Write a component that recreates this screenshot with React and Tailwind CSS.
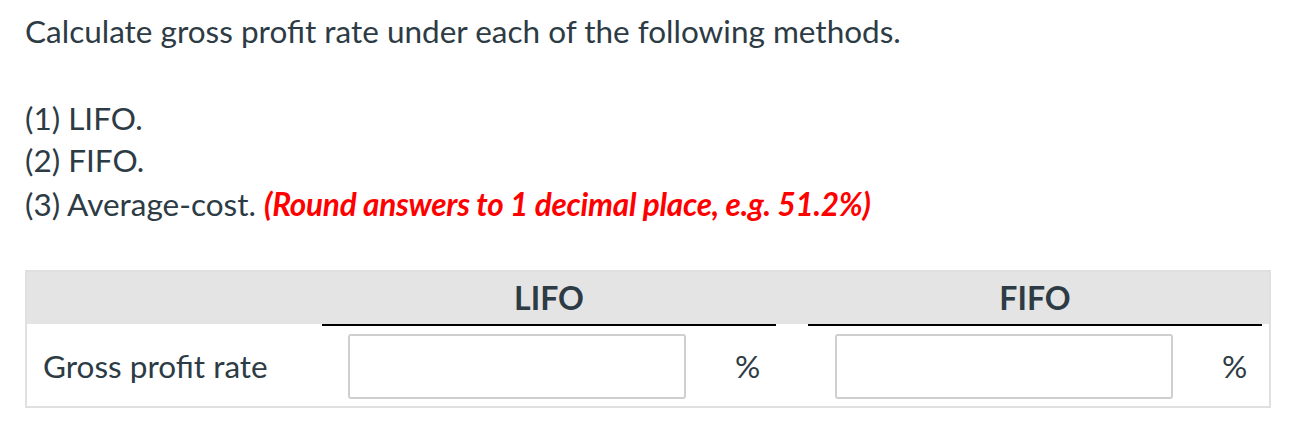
import React from 'react';

const font = { fontFamily: 'Lato, "Noto Sans", sans-serif' };

function AnswerCell({ shift = 'pl-[26px]' }) {
  return (
    <div className={`flex w-[454px] items-center ${shift}`}>
      <input
        type="text"
        className="h-[65px] w-[338px] rounded-[3px] border-2 border-[#cfcfcf] bg-white outline-none"
      />
      <span className="ml-[49px] text-[31.5px] text-[#2d3b45]">%</span>
    </div>
  );
}

export default function App() {
  return (
    <div className="min-h-screen bg-white text-[#2d3b45]" style={font}>
      <div className="pl-[25px] pt-[11px]">
        <p className="text-[31.5px] leading-[40px]">
          Calculate gross profit rate under each of the following methods.
        </p>

        <div className="mt-[46px] text-[31.5px] leading-[42px]">
          <p>(1) LIFO.</p>
          <p>(2) FIFO.</p>
          <p className="pt-[2px]">
            (3) Average-cost.{' '}
            <span className="font-bold italic tracking-[-0.25px] text-[#f00]">
              (Round answers to 1 decimal place, e.g. 51.2%)
            </span>
          </p>
        </div>

        {/* answer table */}
        <div className="mt-[45px] w-[1246px] border-2 border-[#e0e0e0]">
          <div className="flex bg-[#e4e4e4] text-[32px] font-bold leading-[52px]">
            <div className="w-[295px] border-b-2 border-white" />
            <div className="w-[454px] border-b-2 border-black text-center">LIFO</div>
            <div className="w-[32px] border-b-2 border-white" />
            <div className="w-[454px] border-b-2 border-black text-center">FIFO</div>
            <div className="flex-1 border-b-2 border-white" />
          </div>
          <div className="flex h-[80px] items-start pt-[8px]">
            <div className="flex h-[65px] w-[295px] items-center pl-[16px] text-[31.5px]">
              Gross profit rate
            </div>
            <AnswerCell />
            <div className="w-[32px]" />
            <AnswerCell shift="pl-[27px]" />
          </div>
        </div>
      </div>
    </div>
  );
}
